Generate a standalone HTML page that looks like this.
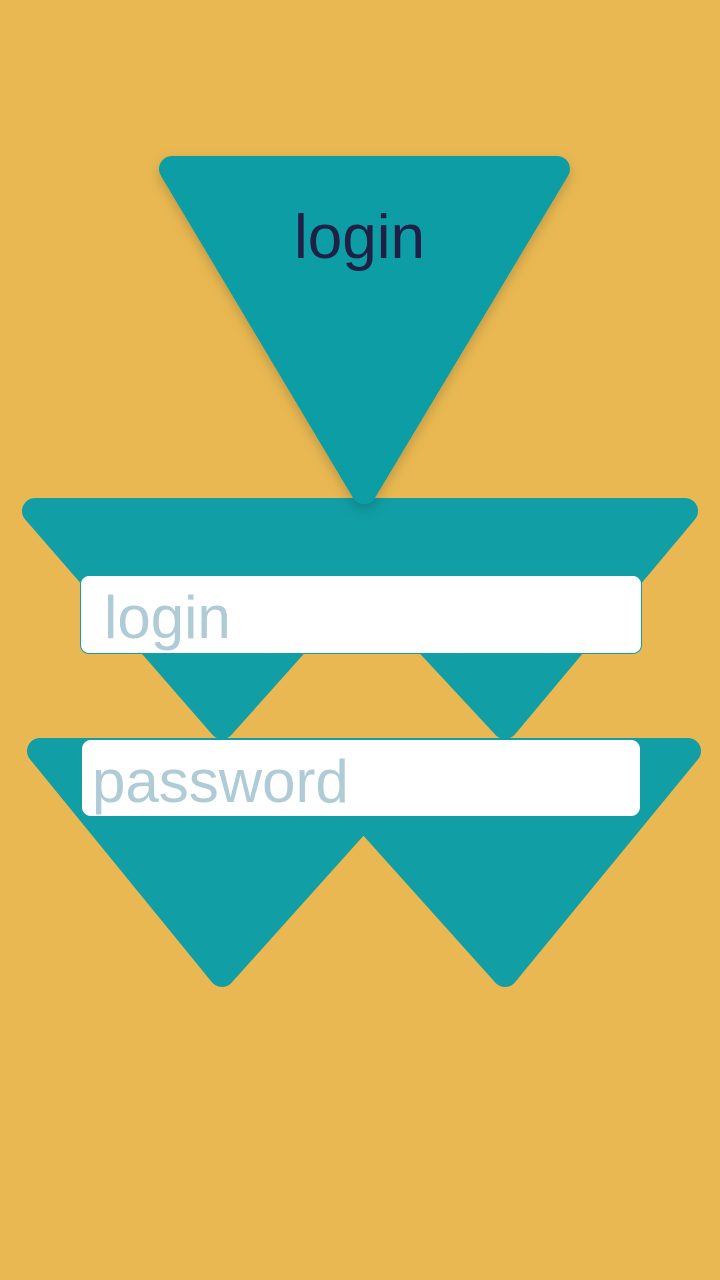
<!DOCTYPE html>
<html><head><style>
html,body{margin:0;padding:0;}
body{width:720px;height:1280px;background:#E9B852;position:relative;overflow:hidden;font-family:"Liberation Sans",sans-serif;}
svg{position:absolute;left:0;top:0;}
.t{position:absolute;white-space:nowrap;line-height:1;}
.inp{position:absolute;background:#fff;border-radius:9px;box-sizing:border-box;}
</style></head><body>
<svg width="720" height="1280" viewBox="0 0 720 1280">
<defs><filter id="sh" x="-20%" y="-20%" width="140%" height="140%"><feDropShadow dx="0" dy="5" stdDeviation="6" flood-color="#000" flood-opacity="0.18"/></filter></defs>
<g fill="#119EA5" stroke="#119EA5" stroke-width="26" stroke-linejoin="round">
<polygon points="40,751 422,751 222,974"/>
<polygon points="305,751 688,751 505,974"/>
<polygon points="35,511 414,511 222,726"/>
<polygon points="305,511 685,511 505,726"/>
<polygon filter="url(#sh)" points="172,169 557,169 364,491"/>
</g>
</svg>
<div class="t" style="left:294px;top:207px;font-size:62px;color:#1E2046;">login</div>
<div class="inp" style="left:80px;top:575px;width:562px;height:79px;border:1.5px solid #129FA5;"></div>
<div class="t" style="left:104px;top:588px;font-size:60px;color:#AECBD6;">login</div>
<div class="inp" style="left:82px;top:740px;width:558px;height:76px;"></div>
<div class="t" style="left:92px;top:752px;font-size:60px;color:#AECBD6;">password</div>
</body></html>
